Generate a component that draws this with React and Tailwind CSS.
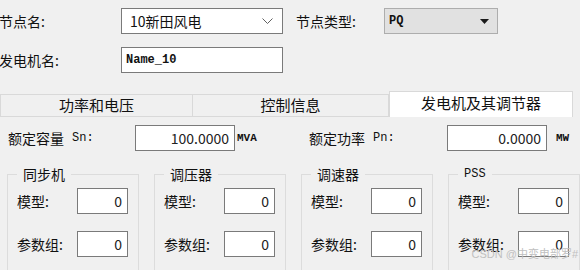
import React from 'react';

const cjk = { fontFamily: '"Noto Sans CJK SC", "Noto Sans", sans-serif' };
const mono = { fontFamily: '"Liberation Mono", "DejaVu Sans Mono", monospace' };

const Chevron = () => (
  <svg width="11" height="7" viewBox="0 0 11 7" className="text-[#606060]">
    <polyline points="0.5,0.5 5.5,5.5 10.5,0.5" fill="none" stroke="currentColor" strokeWidth="1" />
  </svg>
);

const Caret = () => (
  <svg width="9" height="5" viewBox="0 0 9 5">
    <polygon points="0,0 9,0 4.5,5" fill="#1a1a1a" />
  </svg>
);

const NumBox = ({ value, className = '' }) => (
  <div className={`h-[26px] border border-[#7a7a7a] bg-white flex items-center justify-end pr-[5px] text-[14px] text-[#222] ${className}`}>
    {value}
  </div>
);

const GroupBox = ({ title, titleMono }) => (
  <fieldset className="w-[133px] h-[110px] border border-[#dcdcdc] pl-[9px] pr-[8px]">
    <legend className={`ml-0 px-[6px] leading-[18px] text-[#111] ${titleMono ? 'text-[12px]' : 'text-[14px]'}`} style={titleMono ? mono : cjk}>
      {title}
    </legend>
    <div className="flex items-center mt-[5px]">
      <span className="w-[60px] text-[14px] text-[#111]" style={cjk}>模型:</span>
      <NumBox value="0" className="w-[51px]" />
    </div>
    <div className="flex items-center mt-[17px]">
      <span className="w-[60px] text-[14px] text-[#111]" style={cjk}>参数组:</span>
      <NumBox value="0" className="w-[51px]" />
    </div>
  </fieldset>
);

const App = () => {
  return (
    <div className="relative w-[580px] h-[270px] overflow-hidden bg-[#f0f0f0] text-[#111]" style={cjk}>
      {/* node row */}
      <div className="flex items-center mt-[8px] h-[26px]">
        <span className="w-[122px] -ml-[1px] text-[14px]">节点名:</span>
        <div className="w-[162px] h-[26px] border border-[#7a7a7a] bg-white flex items-center justify-between pl-[8px] pr-[9px]">
          <span className="text-[14px]">10新田风电</span>
          <Chevron />
        </div>
        <span className="ml-[13px] w-[88px] text-[14px]">节点类型:</span>
        <div className="w-[114px] h-[26px] border border-[#adadad] bg-[#e1e1e1] flex items-center justify-between pl-[4px] pr-[8px]">
          <span className="text-[12px] font-bold" style={mono}>PQ</span>
          <Caret />
        </div>
      </div>

      <div className="flex items-center mt-[13px] h-[26px]">
        <span className="w-[122px] -ml-[1px] text-[14px]">发电机名:</span>
        <div className="w-[162px] h-[26px] border border-[#7a7a7a] bg-white flex items-center pl-[4px]">
          <span className="text-[12px] font-bold" style={mono}>Name_10</span>
        </div>
      </div>

      {/* tabs */}
      <div className="flex items-end mt-[18px] h-[26px]">
        <div className="w-[193px] h-[23px] border border-[#d9d9d9] bg-[#f0f0f0] flex items-center justify-center text-[15px]">功率和电压</div>
        <div className="w-[196px] h-[23px] border border-l-0 border-[#d9d9d9] bg-[#f0f0f0] flex items-center justify-center text-[15px]">控制信息</div>
        <div className="w-[184px] h-[26px] border border-b-0 border-[#d9d9d9] bg-white flex items-center justify-center text-[15px] pb-[2px]">发电机及其调节器</div>
      </div>

      {/* rating row */}
      <div className="flex items-center mt-[8px] h-[26px]">
        <span className="ml-[8px] text-[14px]">额定容量</span>
        <span className="ml-[8px] w-[63px] text-[12px]" style={mono}>Sn:</span>
        <NumBox value="100.0000" className="w-[100px]" />
        <span className="ml-[2px] w-[72px] text-[11px] font-bold" style={mono}>MVA</span>
        <span className="text-[14px]">额定功率</span>
        <span className="ml-[8px] w-[74px] text-[12px]" style={mono}>Pn:</span>
        <NumBox value="0.0000" className="w-[100px]" />
        <span className="ml-[9px] text-[11px] font-bold" style={mono}>MW</span>
      </div>

      {/* group boxes */}
      <div className="flex mt-[14px] ml-[7px] gap-[15px]">
        <GroupBox title="同步机" />
        <GroupBox title="调压器" />
        <GroupBox title="调速器" />
        <GroupBox title="PSS" titleMono />
      </div>

      <span className="absolute right-[2px] bottom-[8px] text-[11px] text-[#c0c0c0]" style={{ fontFamily: '"Liberation Sans", "Noto Sans CJK SC", sans-serif' }}>
        CSDN @中变电部罗#
      </span>
    </div>
  );
};

export default App;
